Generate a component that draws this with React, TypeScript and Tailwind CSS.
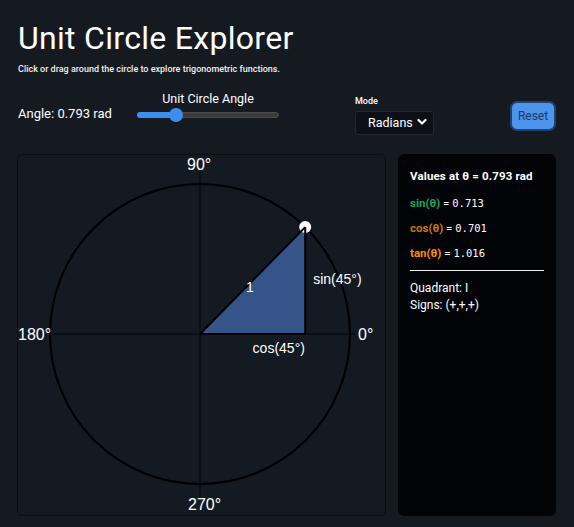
import { useState } from 'react';

const ANGLE = 0.7934;

function UnitCircle({ theta }: { theta: number }) {
  const cx = 200;
  const cy = 333;
  const r = 150;
  const px = cx + r * Math.cos(theta);
  const py = cy - r * Math.sin(theta);
  const deg = Math.round((theta * 180) / Math.PI);

  return (
    <svg width="367" height="360" className="block">
      <g transform="translate(-18,-154)" fontFamily="'Liberation Sans', Arial, sans-serif">
        {/* axes */}
        <line x1={52} y1={cy} x2={355} y2={cy} stroke="#0b0e13" strokeWidth={2} />
        <line x1={cx} y1={171} x2={cx} y2={494} stroke="#0b0e13" strokeWidth={2} />
        <circle cx={cx} cy={cy} r={r} fill="none" stroke="#000" strokeWidth={2} />
        <polygon points={`${cx},${cy} ${px},${cy} ${px},${py}`} fill="#34548a" />
        <circle cx={px} cy={py} r={6} fill="#fff" />
        <line x1={cx} y1={cy} x2={px} y2={py} stroke="#000" strokeWidth={2} />
        <line x1={px} y1={cy} x2={px} y2={py} stroke="#000" strokeWidth={2} />
        <line x1={cx} y1={cy} x2={px} y2={cy} stroke="#000" strokeWidth={2} />

        <text x={187} y={169} fill="#fff" fontSize={16}>90°</text>
        <text x={188} y={509} fill="#fff" fontSize={16}>270°</text>
        <text x={18} y={339} fill="#fff" fontSize={16}>180°</text>
        <text x={358} y={339} fill="#fff" fontSize={16}>0°</text>

        <text x={246} y={291} fill="#fff" fontSize={14}>1</text>
        <text x={px + 8} y={283} fill="#fff" fontSize={14}>sin({deg}°)</text>
        <text x={(cx + px) / 2} y={352} fill="#fff" fontSize={14}>cos({deg}°)</text>
      </g>
    </svg>
  );
}

export default function App() {
  const [angle, setAngle] = useState(ANGLE);
  const [mode, setMode] = useState('rad');
  const sin = Math.sin(angle);
  const cos = Math.cos(angle);
  const tan = Math.tan(angle);
  // slider runs 0..π, thumb is 14px wide
  const frac = angle / Math.PI;
  const thumbX = 7 + (142 - 14) * frac;

  return (
    <div
      className="min-h-[527px] w-[574px] bg-[#151a21] px-[18px] pt-[18px] text-white"
      style={{ fontFamily: 'Roboto, "Noto Sans", sans-serif' }}
    >
      <h1 className="text-[32px] leading-[40px] font-normal tracking-[0.3px]">Unit Circle Explorer</h1>
      <p className="mt-[5px] text-[9px] font-medium leading-[12px] text-[#f0f0f0]">
        Click or drag around the circle to explore trigonometric functions.
      </p>

      {/* Controls */}
      <div className="mt-[11px] flex items-start">
        <div className="mt-[20px] w-[119px] text-[13px] leading-[16px]">Angle: {angle.toFixed(3)} rad</div>
        <div className="mt-[5px] flex w-[142px] flex-col items-center">
          <span className="text-[12.5px] leading-[16px]">Unit Circle Angle</span>
          <div className="relative mt-[1px] h-[14px] w-[142px]">
            <div className="absolute left-0 right-0 top-[4px] h-[6px] rounded-full border border-[#4a4a4a] bg-[#3a3a3a]" />
            <div className="absolute left-0 top-[4px] h-[6px] rounded-full bg-[#3d8ef0]" style={{ width: thumbX }} />
            <div
              className="absolute top-0 h-[14px] w-[14px] -translate-x-1/2 rounded-full bg-[#3d8ef0]"
              style={{ left: thumbX }}
            />
          </div>
        </div>
        <div className="ml-[76px] mt-[9px] flex flex-col">
          <span className="text-[9px] leading-[12px] font-medium">Mode</span>
          <div className="relative mt-[3px]">
            <select
              value={mode}
              onChange={e => setMode(e.target.value)}
              className="h-[24px] w-[79px] appearance-none rounded-[3px] border border-[#222831] bg-[#0d1117] pl-[12px] text-[12.5px] text-white outline-none"
            >
              <option value="rad">Radians</option>
              <option value="deg">Degrees</option>
            </select>
            <svg className="pointer-events-none absolute right-[7px] top-[8px]" width="10" height="8" viewBox="0 0 10 8">
              <path d="M1.5 2 L5 5.5 L8.5 2" fill="none" stroke="#fff" strokeWidth="2.2" strokeLinecap="round" strokeLinejoin="round" />
            </svg>
          </div>
        </div>
        <button
          onClick={() => setAngle(ANGLE)}
          className="ml-auto mt-[15px] h-[30px] w-[46px] rounded-[7px] border-2 border-[#22426e] bg-[#4c94ec] text-[12px] text-[#1b3a62]"
        >
          Reset
        </button>
      </div>

      {/* Main */}
      <div className="mt-[19px] flex gap-[12px]">
        <div className="-ml-[1px] h-[362px] w-[369px] rounded-[5px] border border-[#0a0d11] bg-[#141a22]">
          <UnitCircle theta={angle} />
        </div>
        <div className="h-[362px] w-[158px] rounded-[6px] bg-[#020408] px-[12px] pt-[14px]">
          <div className="text-[11.5px] font-bold leading-[16px] tracking-[0.15px]">Values at θ = {angle.toFixed(3)} rad</div>
          <div className="mt-[11px] flex flex-col gap-[9px] text-[11.5px] leading-[16px]">
            <div>
              <span className="font-bold text-[#17a35d]">sin(θ)</span> ={' '}
              <span style={{ fontFamily: '"DejaVu Sans Mono", monospace' }} className="text-[10.5px]">{sin.toFixed(3)}</span>
            </div>
            <div>
              <span className="font-bold text-[#c97a06]">cos(θ)</span> ={' '}
              <span style={{ fontFamily: '"DejaVu Sans Mono", monospace' }} className="text-[10.5px]">{cos.toFixed(3)}</span>
            </div>
            <div>
              <span className="font-bold text-[#ff8c00]">tan(θ)</span> ={' '}
              <span style={{ fontFamily: '"DejaVu Sans Mono", monospace' }} className="text-[10.5px]">{tan.toFixed(3)}</span>
            </div>
          </div>
          <div className="mt-[9px] h-[1px] w-[134px] bg-[#f2f2f2]" />
          <div className="mt-[9px] text-[12px] leading-[17px]">Quadrant: I</div>
          <div className="text-[12px] leading-[17px]">Signs: (+,+,+)</div>
        </div>
      </div>
    </div>
  );
}
